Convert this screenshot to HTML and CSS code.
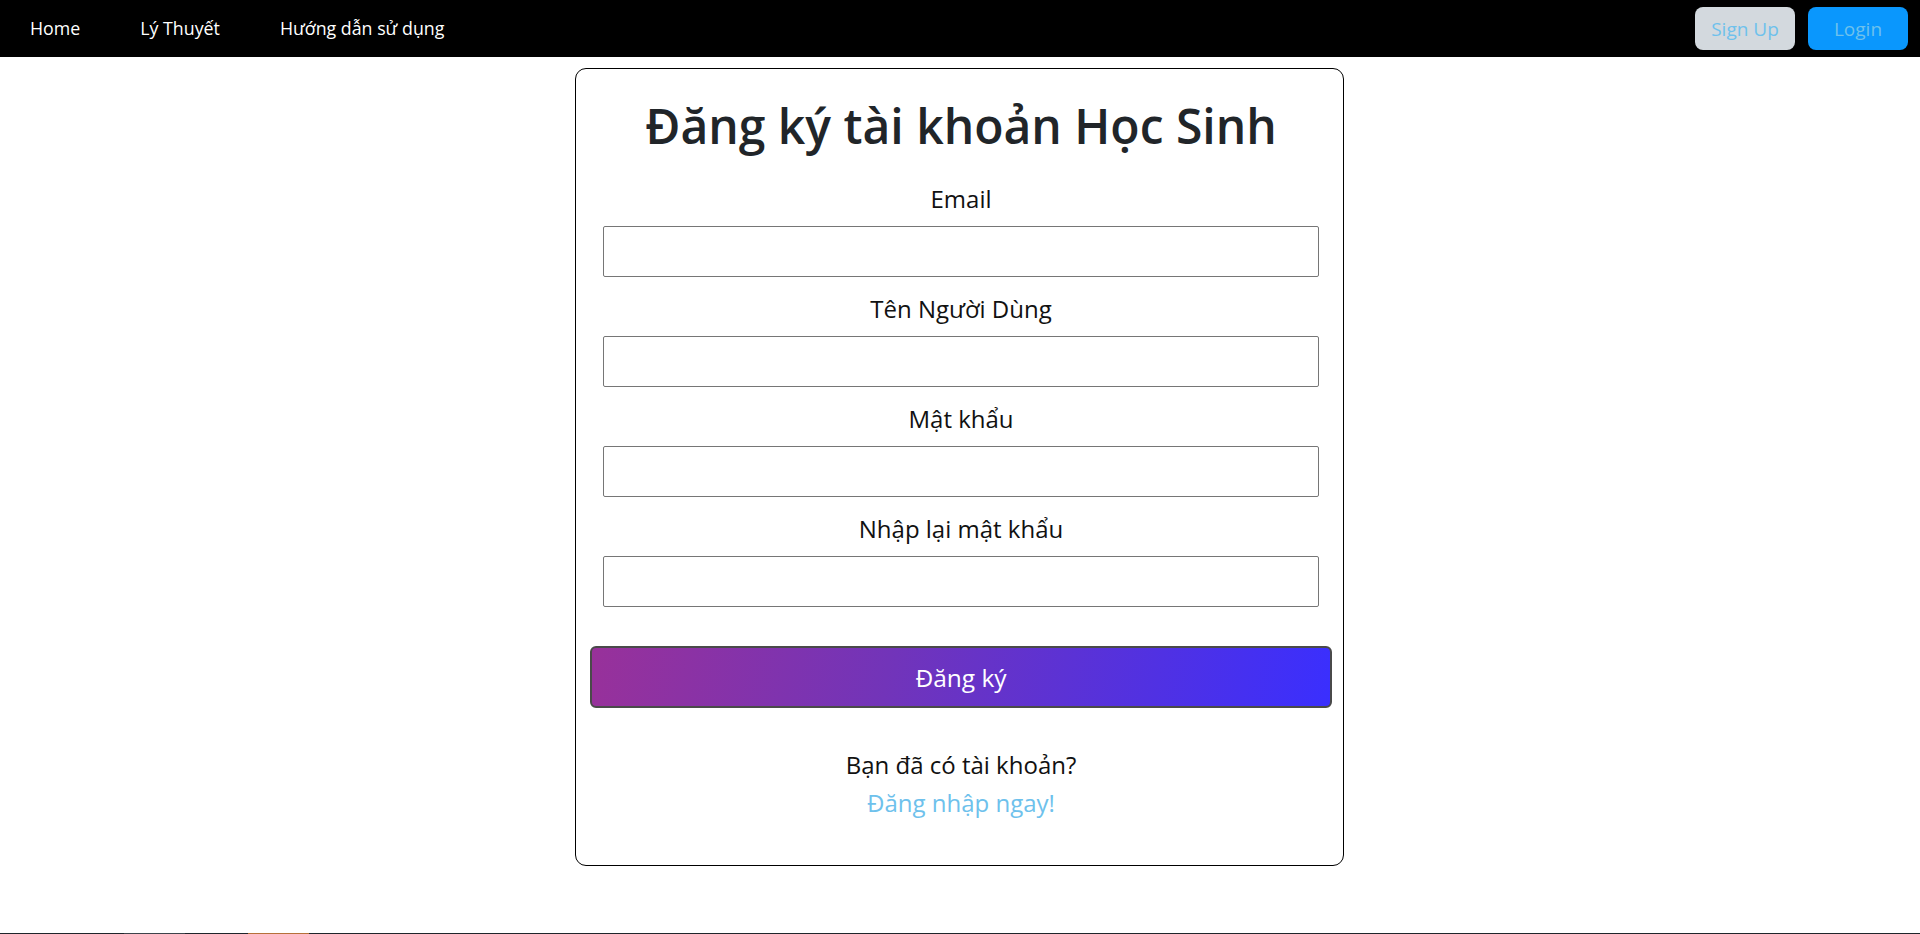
FILE: index.html
```html
<!DOCTYPE html>
<html lang="vi">
<head>
<meta charset="utf-8">
<title>Đăng ký tài khoản Học Sinh</title>
<link rel="stylesheet" href="styles.css">
</head>
<body>
<nav class="navbar">
  <ul class="nav-links">
    <li><a href="#" class="nav-link">Home</a></li>
    <li><a href="#" class="nav-link">Lý Thuyết</a></li>
    <li><a href="#" class="nav-link">Hướng dẫn sử dụng</a></li>
  </ul>
  <div class="nav-actions">
    <a href="#" class="btn btn-signup">Sign Up</a>
    <a href="#" class="btn btn-login">Login</a>
  </div>
</nav>
<main class="page">
  <section class="card">
    <h1 class="title">Đăng ký tài khoản Học Sinh</h1>
    <form class="form">
      <label class="field">
        <span class="label">Email</span>
        <input class="input" type="email">
      </label>
      <label class="field">
        <span class="label">Tên Người Dùng</span>
        <input class="input" type="text">
      </label>
      <label class="field">
        <span class="label">Mật khẩu</span>
        <input class="input" type="password">
      </label>
      <label class="field">
        <span class="label">Nhập lại mật khẩu</span>
        <input class="input" type="password">
      </label>
      <button type="button" class="submit">Đăng ký</button>
    </form>
    <div class="footer-text">
      <p class="question">Bạn đã có tài khoản?</p>
      <a href="#" class="login-link">Đăng nhập ngay!</a>
    </div>
  </section>
</main>
<div class="taskbar">
  <span class="tb-seg tb-dark1"></span>
  <span class="tb-seg tb-gray"></span>
  <span class="tb-seg tb-dark2"></span>
  <span class="tb-seg tb-orange"></span>
  <span class="tb-seg tb-rest"></span>
</div>
</body>
</html>
```
FILE: styles.css
```css
* { box-sizing: border-box; }
html, body { margin: 0; padding: 0; }
body {
  font-family: "Open Sans", "Noto Sans", "Liberation Sans", sans-serif;
  background: #fff;
  color: #000;
  height: 934px;
  overflow: hidden;
}
a { text-decoration: none; }

.navbar {
  height: 57px;
  background: #000;
  display: flex;
  align-items: center;
  justify-content: space-between;
}
.nav-links {
  list-style: none;
  margin: 0;
  padding: 0;
  display: flex;
  align-items: center;
}
.nav-link {
  display: block;
  padding: 0 30px;
  color: #fff;
  font-size: 17.8px;
  line-height: 57px;
}
.nav-actions {
  display: flex;
  gap: 13px;
  padding-right: 12px;
}
.btn {
  width: 100px;
  height: 43px;
  border-radius: 8px;
  display: flex;
  align-items: center;
  justify-content: center;
  font-size: 19px;
  color: #6ec1ec;
}
.btn-signup { background: #d3d9de; }
.btn-login { background: #0a97fd; }

.page {
  display: flex;
  justify-content: center;
  padding-top: 11px;
}
.card {
  width: 769px;
  height: 798px;
  border: 1px solid #000;
  border-radius: 11px;
  padding: 0 11px 0 14px;
  display: flex;
  flex-direction: column;
  margin-left: -1px;
}
.title {
  margin: 23px 0 0;
  font-size: 48px;
  font-weight: 600;
  line-height: 68px;
  text-align: center;
  color: #212529;
}
.form {
  display: flex;
  flex-direction: column;
  margin-top: 16px;
}
.field {
  display: flex;
  flex-direction: column;
  align-items: center;
  margin: 0 13px 9px;
}
.label {
  font-size: 24px;
  line-height: 46px;
  margin-bottom: 4px;
  color: #111;
}
.input {
  width: 100%;
  height: 51px;
  border: 1px solid #767676;
  border-radius: 2px;
  font-size: 20px;
  padding: 0 10px;
}
.submit {
  margin-top: 30px;
  height: 62px;
  width: 100%;
  border: 2px solid #4a4a4a;
  border-radius: 6px;
  background: linear-gradient(100deg, #98319a 0%, #7234b9 40%, #3a2ffe 100%);
  color: #fff;
  font-family: inherit;
  font-size: 24.5px;
}
.footer-text {
  margin-top: 38px;
  display: flex;
  flex-direction: column;
  align-items: center;
}
.question {
  margin: 0;
  font-size: 24px;
  line-height: 38px;
  color: #111;
}
.login-link {
  font-size: 24px;
  line-height: 38px;
  color: #6ec1ec;
}

.taskbar {
  position: fixed;
  left: 0;
  right: 0;
  bottom: 0;
  height: 1px;
  display: flex;
}
.tb-seg { display: block; height: 1px; }
.tb-dark1 { width: 124px; background: #1f252b; }
.tb-gray { width: 61px; background: #3e444b; }
.tb-dark2 { width: 63px; background: #1f252b; }
.tb-orange { width: 61px; background: #b6713a; }
.tb-rest { flex: 1; background: #1f252b; }
```
